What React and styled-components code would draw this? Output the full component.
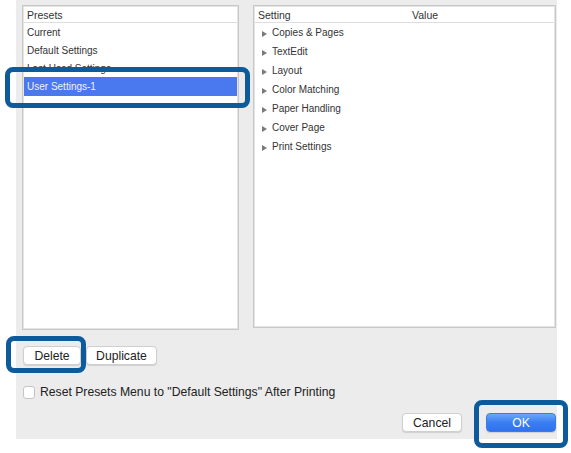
import React from "react";
import styled, { createGlobalStyle } from "styled-components";

const GlobalStyle = createGlobalStyle`
  html, body { margin: 0; padding: 0; background: #ffffff; }
  body { font-family: "Liberation Sans", Arial, sans-serif; color: #2a2a2a; }
`;

const Page = styled.div`
  position: relative;
  width: 571px;
  height: 453px;
  overflow: hidden;
`;

const Dialog = styled.div`
  margin-left: 16px;
  width: 541px;
  height: 439px;
  box-sizing: border-box;
  background: #ececec;
  padding: 5px 1px 0 6px;
  display: flex;
  flex-direction: column;
`;

const Panels = styled.div`
  display: flex;
  gap: 14px;
  align-items: flex-start;
`;

const Panel = styled.div`
  box-sizing: border-box;
  width: ${(p) => p.$w}px;
  height: ${(p) => p.$h}px;
  background: #ffffff;
  border: 1px solid #c8c8c8;
  box-shadow: inset 0 0 0 1px #e4e4e4;
  padding: 1px;
  display: flex;
  flex-direction: column;
`;

const Header = styled.div`
  height: 15px;
  border-bottom: 1px solid #dedede;
  display: flex;
  align-items: center;
  font-size: 10.5px;
  color: #333;
  padding-left: ${(p) => p.$pl}px;
`;

const HeaderCell = styled.div`
  width: ${(p) => (p.$w ? `${p.$w}px` : "auto")};
`;

const Row = styled.div`
  height: ${(p) => p.$h}px;
  display: flex;
  align-items: center;
  font-size: 10px;
  padding-left: ${(p) => p.$pl}px;
  color: ${(p) => (p.$sel ? "#eef2ff" : "#333")};
  background: ${(p) => (p.$sel ? "#4a78ee" : "transparent")};
`;

const Tri = styled.span`
  display: inline-block;
  width: 0;
  height: 0;
  border-top: 3px solid transparent;
  border-bottom: 3px solid transparent;
  border-left: 5px solid #7a7a7a;
  margin-right: 5px;
  margin-top: 2px;
`;

const ButtonRow = styled.div`
  display: flex;
  gap: 5px;
  margin: 16px 0 0 1px;
`;

const Button = styled.button`
  box-sizing: border-box;
  height: 19px;
  width: ${(p) => p.$w}px;
  padding: 0;
  font-family: "Liberation Sans", Arial, sans-serif;
  font-size: 12.2px;
  color: ${(p) => (p.$primary ? "#ffffff" : "#222")};
  background: ${(p) =>
    p.$primary
      ? "linear-gradient(#6aa8fb, #3b7ef2 50%, #2f72ee)"
      : "#ffffff"};
  border: 1px solid ${(p) => (p.$primary ? "#3d7ae8" : "#cfcfcf")};
  border-radius: 4px;
  box-shadow: 0 1px 1px rgba(0, 0, 0, 0.12);
`;

const CheckRow = styled.label`
  display: flex;
  align-items: center;
  gap: 5px;
  margin: 20px 0 0 1px;
  font-size: 12.2px;
  color: #222;
`;

const Box = styled.span`
  box-sizing: border-box;
  width: 12px;
  height: 13px;
  background: #fff;
  border: 1px solid #c4c4c4;
  border-radius: 3px;
`;

const Footer = styled.div`
  display: flex;
  justify-content: flex-end;
  gap: 24px;
  margin-top: 14px;
  padding-right: 0;
`;

const Mark = styled.div`
  position: absolute;
  box-sizing: border-box;
  left: ${(p) => p.$x}px;
  top: ${(p) => p.$y}px;
  width: ${(p) => p.$w}px;
  height: ${(p) => p.$h}px;
  border: 5px solid #0d5b9a;
  border-radius: 8px;
`;

const presets = ["Current", "Default Settings", "Last Used Settings", "User Settings-1"];
const settings = [
  "Copies & Pages",
  "TextEdit",
  "Layout",
  "Color Matching",
  "Paper Handling",
  "Cover Page",
  "Print Settings",
];

export default function App() {
  return (
    <Page>
      <GlobalStyle />
      <Dialog>
        <Panels>
          <Panel $w={217} $h={325}>
            <Header $pl={3}>Presets</Header>
            {presets.map((p, i) => (
              <Row key={p} $h={i === 3 ? 19 : 18} $pl={3} $sel={i === 3}>
                {p}
              </Row>
            ))}
          </Panel>
          <Panel $w={303} $h={323}>
            <Header $pl={3}>
              <HeaderCell $w={154}>Setting</HeaderCell>
              <HeaderCell>Value</HeaderCell>
            </Header>
            {settings.map((s) => (
              <Row key={s} $h={19} $pl={7}>
                <Tri />
                {s}
              </Row>
            ))}
          </Panel>
        </Panels>
        <ButtonRow>
          <Button $w={58}>Delete</Button>
          <Button $w={71}>Duplicate</Button>
        </ButtonRow>
        <CheckRow>
          <Box />
          Reset Presets Menu to "Default Settings" After Printing
        </CheckRow>
        <Footer>
          <Button $w={60}>Cancel</Button>
          <Button $w={70} $primary>
            OK
          </Button>
        </Footer>
      </Dialog>
      <Mark $x={5} $y={67} $w={245} $h={41} />
      <Mark $x={6} $y={336} $w={80} $h={37} />
      <Mark $x={474} $y={400} $w={94} $h={48} />
    </Page>
  );
}
